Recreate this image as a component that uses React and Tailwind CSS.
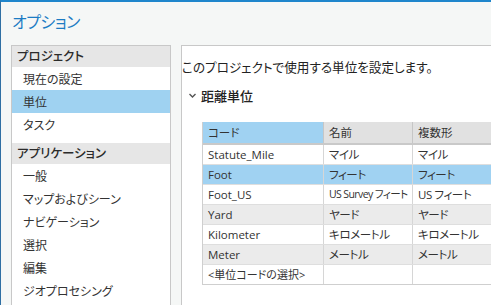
import React from 'react';

const jp = "font-['Noto_Sans_CJK_JP','Noto_Sans',sans-serif] [font-feature-settings:'palt']";
const latin = "font-['Open_Sans','Noto_Sans_CJK_JP',sans-serif] [font-feature-settings:'palt']";

const projectItems = ['現在の設定', '単位', 'タスク'];
const appItems = ['一般', 'マップおよびシーン', 'ナビゲーション', '選択', '編集', 'ジオプロセシング'];

const rows = [
    { code: 'Statute_Mile', name: 'マイル', plural: 'マイル' },
    { code: 'Foot', name: 'フィート', plural: 'フィート', selected: true },
    { code: 'Foot_US', name: 'US Survey フィート', plural: 'US フィート', tight: true },
    { code: 'Yard', name: 'ヤード', plural: 'ヤード', alt: true },
    { code: 'Kilometer', name: 'キロメートル', plural: 'キロメートル' },
    { code: 'Meter', name: 'メートル', plural: 'メートル', alt: true },
];

function SectionHeader({ children }) {
    return (
        <div className="h-[21px] bg-[#e6e6e6] pl-[5px] flex items-center text-[12.5px] text-[#2b2b2b] font-medium">
            {children}
        </div>
    );
}

function NavItem({ label, active }) {
    return (
        <div className={`h-[23px] pl-[11px] flex items-center text-[12px] text-[#333] ${active ? 'bg-[#9fd2f1]' : ''}`}>
            {label}
        </div>
    );
}

function Sidebar() {
    return (
        <div className={`w-[160px] ml-[10px] bg-white border border-[#c8c8c8] border-b-0 ${jp}`}>
            <SectionHeader>プロジェクト</SectionHeader>
            {projectItems.map((item) => (
                <NavItem key={item} label={item} active={item === '単位'} />
            ))}
            <div className="h-[7px]" />
            <SectionHeader>アプリケーション</SectionHeader>
            {appItems.map((item) => (
                <NavItem key={item} label={item} />
            ))}
        </div>
    );
}

function Cell({ children, w, last }) {
    return (
        <div className={`${w} shrink-0 h-full flex items-center pl-[5px] whitespace-nowrap overflow-hidden ${last ? '' : 'border-r border-[#d6d6d6]'}`}>
            {children}
        </div>
    );
}

function UnitTable() {
    return (
        <div className={`ml-[20px] mt-[17px] w-[320px] border-l border-b border-[#cfcfcf] text-[11.5px] text-[#333] ${latin}`}>
            <div className="flex h-[23px] border-b-2 border-[#c9c9c9]">
                <div className="w-[121px] shrink-0 bg-[#a0d2f2] flex items-center pl-[5px] border-r border-[#c6c6c6]">コード</div>
                <div className="w-[89px] shrink-0 bg-[#e1e1e1] flex items-center pl-[5px] border-r border-[#c6c6c6]">名前</div>
                <div className="flex-1 bg-[#e1e1e1] flex items-center pl-[5px]">複数形</div>
            </div>
            {rows.map((r) => (
                <div
                    key={r.code}
                    className={`flex h-[20px] border-b border-[#dedede] ${r.selected ? 'bg-[#a0d2f2]' : r.alt ? 'bg-[#ebebeb]' : 'bg-white'}`}
                >
                    <Cell w="w-[121px]">{r.code}</Cell>
                    <Cell w="w-[89px]">
                        <span className={r.tight ? 'text-[10.5px] tracking-[-0.6px]' : 'tracking-[-0.4px]'}>{r.name}</span>
                    </Cell>
                    <Cell w="flex-1" last>
                        <span className="tracking-[-0.4px]">{r.plural}</span>
                    </Cell>
                </div>
            ))}
            <div className="flex h-[19px] bg-white">
                <Cell w="w-[121px]">
                    <span className="text-[11px]">&lt;単位コードの選択&gt;</span>
                </Cell>
                <Cell w="w-[89px]" />
                <Cell w="flex-1" last />
            </div>
        </div>
    );
}

function Panel() {
    return (
        <div className={`flex-1 bg-white border-t border-l border-[#c8c8c8] overflow-hidden ${jp}`}>
            <div className="mt-[12px] text-[12.6px] text-[#222] whitespace-nowrap">このプロジェクトで使用する単位を設定します。</div>
            <div className="mt-[9px] ml-[6px] flex items-center gap-[4px] text-[13px] text-[#222] font-medium">
                <svg width="9" height="9" viewBox="0 0 9 9">
                    <path d="M1.5 3 L4.5 6 L7.5 3" fill="none" stroke="#555" strokeWidth="1.4" />
                </svg>
                <span>距離単位</span>
            </div>
            <UnitTable />
        </div>
    );
}

export default function App() {
    return (
        <div className="w-[491px] h-[305px] overflow-hidden bg-[#f5f7f6] border-t-2 border-t-[#1f86cc] border-l border-l-[#2f6fa3] flex flex-col">
            <div className={`h-[43px] shrink-0 pl-[11px] pt-[7px] text-[16px] tracking-[-0.5px] text-[#1c7cc4] ${jp}`}>オプション</div>
            <div className="flex flex-1 min-h-0 gap-[10px]">
                <Sidebar />
                <Panel />
            </div>
        </div>
    );
}
